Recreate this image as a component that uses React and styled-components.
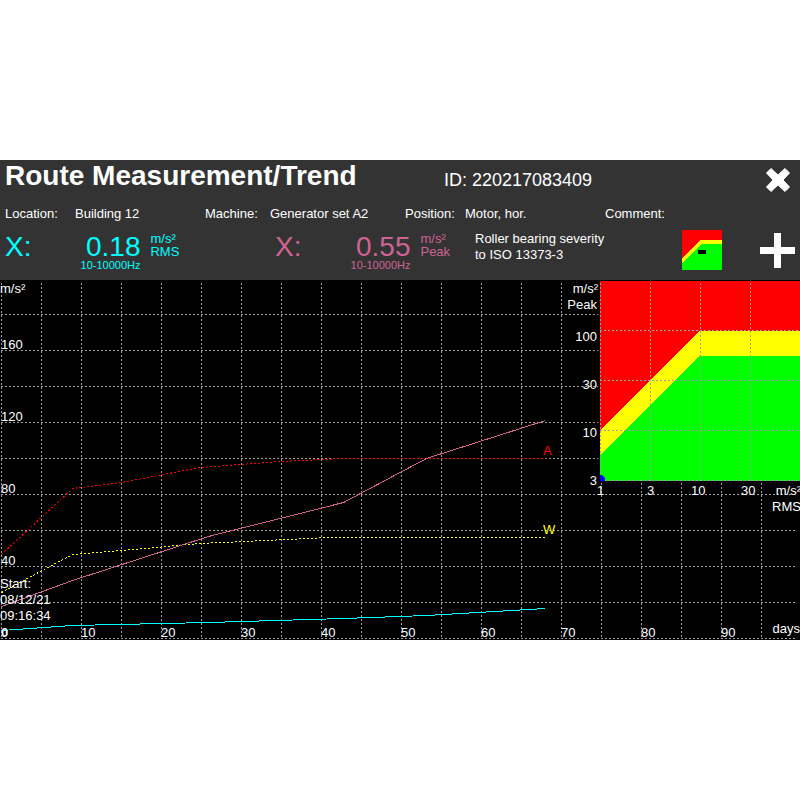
import React from "react";
import styled, { createGlobalStyle } from "styled-components";

const CYAN = "#00ffff";
const PINK = "#ce6394";

const X_TICKS = [0, 10, 20, 30, 40, 50, 60, 70, 80, 90];
const Y_TICKS = [40, 80, 120, 160];
const GRID_COLUMNS = Array.from({ length: 20 }, (_, i) => 1 + i * 40);
const GRID_ROWS = Array.from({ length: 10 }, (_, i) => 34 + i * 36);

const READINGS = [
  { axis: "X:", value: "0.18", unit: "m/s²", kind: "RMS", band: "10-10000Hz", color: CYAN },
  { axis: "X:", value: "0.55", unit: "m/s²", kind: "Peak", band: "10-10000Hz", color: PINK },
];

const SeverityIcon = () => (
  <svg width="40" height="40" viewBox="0 0 40 40" shapeRendering="crispEdges" aria-hidden="true">
    <rect width="40" height="40" fill="#ff0000" />
    <path d="M0 28 L18 10 H40 V40 H0 Z" fill="#ffff00" />
    <path d="M0 33 L19 14 H40 V40 H0 Z" fill="#00ff00" />
    <rect x="16" y="20" width="8" height="4" fill="#000000" />
  </svg>
);

const CloseIcon = () => (
  <svg width="26" height="26" viewBox="0 0 26 26" aria-hidden="true">
    <path
      d="M6 1.5 L13 8 L20 1.5 L24.5 6 L18 13 L24.5 20 L20 24.5 L13 18 L6 24.5 L1.5 20 L8 13 L1.5 6 Z"
      fill="#ffffff"
      stroke="#ffffff"
      strokeLinejoin="round"
    />
  </svg>
);

const PlusIcon = () => (
  <svg width="35" height="35" viewBox="0 0 35 35" aria-hidden="true">
    <path d="M14 0 H21 V14 H35 V21 H21 V35 H14 V21 H0 V14 H14 Z" fill="#ffffff" />
  </svg>
);

const TrendChart = () => (
  <Chart viewBox="0 0 800 360" role="img" aria-label="Trend">
    {GRID_COLUMNS.map((x) => (
      <GridLine key={x} x1={x + 0.5} x2={x + 0.5} y1={3} y2={359} />
    ))}
    {GRID_ROWS.map((y) => (
      <GridLine key={y} x1={1} x2={797} y1={y + 0.5} y2={y + 0.5} />
    ))}
    <g transform="translate(0.5 0.5)">
      <Series $color="#ff0000" $dashed points="1,274 72,208 121,202 200,187 280,181 343,178 545,178" />
      <Series $color="#ffff00" $dashed points="1,312 36,293 72,274 121,270 200,263 330,257 545,257" />
      <Series $color={PINK} points="1,326 72,300 208,256 343,222 426,178 545,140" />
      <Series $color={CYAN} points="1,350 72,345 208,342 343,338 426,335 545,328" />
    </g>
    {Y_TICKS.map((tick) => (
      <AxisText key={tick} x={1} y={357 - tick * 1.8}>
        {tick}
      </AxisText>
    ))}
    {X_TICKS.map((tick) => (
      <AxisText key={tick} x={1 + tick * 8} y={357} $bold={tick === 0}>
        {tick}
      </AxisText>
    ))}
    <AxisText x={0} y={13}>m/s²</AxisText>
    <AxisText x={0} y={308}>Start:</AxisText>
    <AxisText x={0} y={324}>08/12/21</AxisText>
    <AxisText x={0} y={340}>09:16:34</AxisText>
    <AxisText x={800} y={353} $end>days</AxisText>
    <AxisText x={543} y={175} $color="#ff0000">A</AxisText>
    <AxisText x={543} y={254} $color="#ffff00">W</AxisText>
  </Chart>
);

const SeverityChart = () => (
  <Chart viewBox="0 0 238 240" role="img" aria-label="Roller bearing severity">
    <rect x="36" y="0" width="202" height="202" fill="#000000" />
    <g shapeRendering="crispEdges">
      <rect x="38" y="1" width="200" height="200" fill="#ff0000" />
      <path d="M38 150 L137 51 H238 V201 H38 Z" fill="#ffff00" />
      <path d="M38 175 L138 76 H238 V201 H38 Z" fill="#00ff00" />
    </g>
    {[38, 88, 138, 188].map((x) => (
      <GridLine key={x} x1={x + 0.5} x2={x + 0.5} y1={3} y2={201} />
    ))}
    {[50, 100, 150, 200].map((y) => (
      <GridLine key={y} x1={38} x2={238} y1={y + 0.5} y2={y + 0.5} />
    ))}
    <path d="M38 195 H40 L43 198 V201 H38 Z" fill="#0000ff" />
    <AxisText x={36} y={13} $end>m/s²</AxisText>
    <AxisText x={35} y={29} $end>Peak</AxisText>
    <AxisText x={35} y={61} $end>100</AxisText>
    <AxisText x={35} y={109} $end>30</AxisText>
    <AxisText x={35} y={157} $end>10</AxisText>
    <AxisText x={35} y={205} $end>3</AxisText>
    <AxisText x={35} y={215}>1</AxisText>
    <AxisText x={85} y={215}>3</AxisText>
    <AxisText x={129} y={215}>10</AxisText>
    <AxisText x={179} y={215}>30</AxisText>
    <AxisText x={239} y={215} $end>m/s²</AxisText>
    <AxisText x={239} y={231} $end>RMS</AxisText>
  </Chart>
);

const App = () => {
  return (
    <Wrapper>
      <GlobalStyle />
      <Screen>
        <Header>
          <TitleRow>
            <Title>Route Measurement/Trend</Title>
            <RouteId>ID: 220217083409</RouteId>
            <IconButton type="button" aria-label="Close">
              <CloseIcon />
            </IconButton>
          </TitleRow>
          <InfoRow>
            <Info>
              <Label $width={70}>Location:</Label>
              <dd>Building 12</dd>
            </Info>
            <Info>
              <Label $width={65}>Machine:</Label>
              <dd>Generator set A2</dd>
            </Info>
            <Info>
              <Label $width={60}>Position:</Label>
              <dd>Motor, hor.</dd>
            </Info>
            <Info>
              <Label $width={60}>Comment:</Label>
            </Info>
          </InfoRow>
          <ReadingRow>
            {READINGS.map((reading) => (
              <Reading key={reading.kind} $color={reading.color}>
                <Big>{reading.axis}</Big>
                <ValueBox>
                  <Big>{reading.value}</Big>
                  <Band>{reading.band}</Band>
                </ValueBox>
                <Unit>
                  {reading.unit}
                  <br />
                  {reading.kind}
                </Unit>
              </Reading>
            ))}
            <Norm>
              Roller bearing severity
              <br />
              to ISO 13373-3
            </Norm>
            <Actions>
              <IconButton type="button" aria-label="Severity chart">
                <SeverityIcon />
              </IconButton>
              <IconButton type="button" aria-label="Add">
                <PlusIcon />
              </IconButton>
            </Actions>
          </ReadingRow>
        </Header>
        <Plot>
          <TrendChart />
          <Inset>
            <SeverityChart />
          </Inset>
        </Plot>
      </Screen>
    </Wrapper>
  );
};

export default App;

const GlobalStyle = createGlobalStyle`
  * {
    box-sizing: border-box;
  }

  body {
    margin: 0;
    background: #ffffff;
    font-family: "Liberation Sans", Arial, sans-serif;
  }
`;

const Wrapper = styled.div`
  min-height: 100vh;
  display: flex;
  flex-direction: column;
  justify-content: center;
`;

const Screen = styled.main`
  width: 100%;
  color: #ffffff;
  background: #000000;
`;

const Header = styled.header`
  background: #333333;
`;

const TitleRow = styled.div`
  display: grid;
  grid-template-columns: 439fr 321fr auto;
  align-items: center;
  height: 40px;
  padding: 0 9px 0 5px;
`;

const Title = styled.h1`
  margin: 0 0 8px;
  font-size: 28px;
  line-height: 32px;
  font-weight: bold;
  white-space: nowrap;
`;

const RouteId = styled.div`
  font-size: 18px;
  line-height: 24px;
`;

const IconButton = styled.button`
  display: flex;
  padding: 0;
  border: 0;
  background: none;
  cursor: pointer;
`;

const InfoRow = styled.dl`
  display: grid;
  grid-template-columns: 200fr 200fr 200fr 195fr;
  height: 28px;
  margin: 0;
  padding: 4px 0 0 5px;
  font-size: 13px;
  line-height: 20px;
  white-space: nowrap;
`;

const Info = styled.div`
  display: flex;

  dd {
    margin: 0;
  }
`;

const Label = styled.dt`
  width: ${({ $width }) => $width}px;
`;

const ReadingRow = styled.div`
  display: grid;
  grid-template-columns: 270fr 200fr 150fr 175fr;
  height: 52px;
  padding-left: 5px;
`;

const Reading = styled.div`
  display: flex;
  padding-top: 2px;
  color: ${({ $color }) => $color};
`;

const Big = styled.div`
  font-size: 28px;
  line-height: 34px;
`;

const ValueBox = styled.div`
  width: 109px;
  text-align: right;
`;

const Band = styled.div`
  margin-top: -3px;
  font-size: 11px;
  line-height: 8px;
`;

const Unit = styled.div`
  margin-left: 10px;
  padding-top: 2px;
  font-size: 13px;
  line-height: 13px;
`;

const Norm = styled.div`
  padding-top: 3px;
  font-size: 13px;
  line-height: 16px;
  white-space: nowrap;
`;

const Actions = styled.div`
  display: flex;
  align-items: center;
  justify-content: flex-end;
  gap: 38px;
  height: 44px;
  padding-right: 5px;
`;

const Plot = styled.div`
  position: relative;
`;

/* the severity diagram lies over the trend's top right corner */
const Inset = styled.div`
  position: absolute;
  top: 0;
  right: 0;
  width: 29.75%;
`;

const Chart = styled.svg`
  display: block;
  width: 100%;
  height: auto;
`;

const GridLine = styled.line`
  stroke: #a0a0a0;
  stroke-width: 1;
  stroke-dasharray: 2 2;
`;

const Series = styled.polyline`
  fill: none;
  stroke: ${({ $color }) => $color};
  stroke-width: 1;
  stroke-dasharray: ${({ $dashed }) => ($dashed ? "2 2" : "none")};
  shape-rendering: crispEdges;
`;

const AxisText = styled.text`
  fill: ${({ $color }) => $color || "#ffffff"};
  font-size: 13px;
  font-weight: ${({ $bold }) => ($bold ? "bold" : "normal")};
  text-anchor: ${({ $end }) => ($end ? "end" : "start")};
`;
